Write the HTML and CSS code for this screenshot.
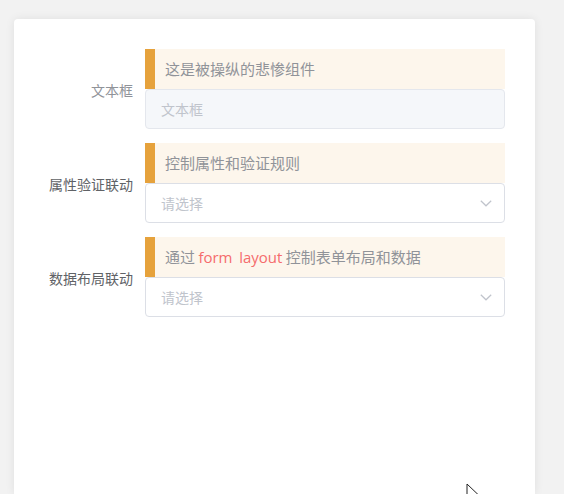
FILE: index.html
```html
<!DOCTYPE html>
<html lang="zh">
<head>
<meta charset="utf-8">
<link rel="stylesheet" href="styles.css">
</head>
<body>
<div class="page">
  <div class="card">
    <div class="form-item">
      <div class="label label-muted">文本框</div>
      <div class="field">
        <div class="alert">这是被操纵的悲惨组件</div>
        <div class="input input-disabled"><span class="placeholder">文本框</span></div>
      </div>
    </div>
    <div class="form-item">
      <div class="label">属性验证联动</div>
      <div class="field">
        <div class="alert">控制属性和验证规则</div>
        <div class="input"><span class="placeholder">请选择</span>
          <svg class="chevron" width="12" height="7" viewBox="0 0 12 7"><path d="M0.8 0.8 L6 5.8 L11.2 0.8" fill="none" stroke="#c0c4cc" stroke-width="1.2"/></svg>
        </div>
      </div>
    </div>
    <div class="form-item">
      <div class="label">数据布局联动</div>
      <div class="field">
        <div class="alert">通过 <span class="hl">form</span>&nbsp; <span class="hl">layout</span> 控制表单布局和数据</div>
        <div class="input"><span class="placeholder">请选择</span>
          <svg class="chevron" width="12" height="7" viewBox="0 0 12 7"><path d="M0.8 0.8 L6 5.8 L11.2 0.8" fill="none" stroke="#c0c4cc" stroke-width="1.2"/></svg>
        </div>
      </div>
    </div>
  </div>
  <svg class="cursor" width="14" height="20" viewBox="0 0 14 20"><path d="M1 1 L1 16 L4.5 12.5 L7 18.5 L9.5 17.5 L7 11.5 L12 11.5 Z" fill="#fff" stroke="#222" stroke-width="1"/></svg>
</div>
</body>
</html>
```

FILE: styles.css
```css
html, body {
  margin: 0;
  padding: 0;
  background: #f2f2f2;
  font-family: "Noto Sans CJK SC", "Open Sans", sans-serif;
  overflow: hidden;
}
.page {
  position: relative;
  width: 564px;
  height: 494px;
  padding: 19px 29px 0 14px;
  box-sizing: border-box;
  overflow: hidden;
}
.card {
  background: #fff;
  border-radius: 4px 4px 0 0;
  box-shadow: 0 0 10px rgba(0,0,0,0.08);
  height: 475px;
  padding-top: 30px;
  box-sizing: border-box;
  display: flex;
  flex-direction: column;
  gap: 14px;
}
.form-item {
  display: grid;
  grid-template-columns: 131px 360px;
  align-items: center;
}
.label {
  text-align: right;
  padding-right: 12px;
  font-size: 14px;
  color: #606266;
  line-height: 20px;
  padding-top: 1px;
}
.label-muted {
  color: #909399;
}
.field {
  display: flex;
  flex-direction: column;
}
.alert {
  height: 40px;
  box-sizing: border-box;
  background: #fdf6ec;
  border-left: 10px solid #e6a23c;
  padding-left: 10px;
  font-size: 15px;
  line-height: 40px;
  color: #909399;
  white-space: nowrap;
}
.hl {
  color: #f56c6c;
  font-family: "Open Sans", "Noto Sans CJK SC", sans-serif;
}
.input {
  height: 40px;
  box-sizing: border-box;
  border: 1px solid #dcdfe6;
  border-radius: 4px;
  padding: 0 15px;
  display: flex;
  align-items: center;
  justify-content: space-between;
  background: #fff;
}
.input-disabled {
  background: #f5f7fa;
  border-color: #e4e7ed;
}
.placeholder {
  font-size: 14px;
  color: #c0c4cc;
}
.chevron {
  margin-right: -3px;
}
.cursor {
  position: absolute;
  left: 466px;
  top: 483px;
}
```
